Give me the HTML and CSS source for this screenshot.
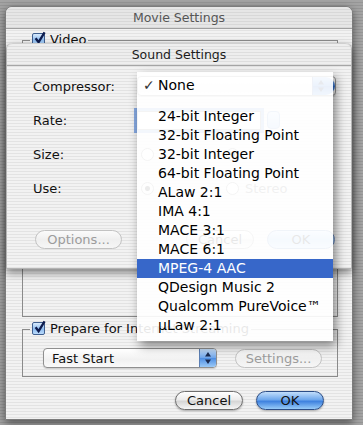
FILE: index.html
```html
<!DOCTYPE html>
<html lang="en">
<head>
    <meta charset="UTF-8">
    <title>Movie Settings</title>
    <link rel="stylesheet" href="styles.css">
</head>
<body>
    <div class="window">
        <div class="titlebar">Movie Settings</div>

        <fieldset class="group group-video">
            <legend>
                <span class="check"><svg viewBox="0 0 13 13"><path d="M2.6 6.2 L5.6 10.2 L11.6 0.4"/></svg></span>
                Video
            </legend>
        </fieldset>

        <fieldset class="group group-stream">
            <legend>
                <span class="check"><svg viewBox="0 0 13 13"><path d="M2.6 6.2 L5.6 10.2 L11.6 0.4"/></svg></span>
                Prepare for Internet Streaming
            </legend>
            <div class="group-row">
                <div class="popup popup-fast">
                    <span class="popup-text">Fast Start</span>
                    <span class="popup-arrows"><svg viewBox="0 0 16 18"><path d="M8 3 L11 7.5 H5 Z M8 15 L11 10.5 H5 Z"/></svg></span>
                </div>
                <button class="btn btn-disabled btn-settings">Settings...</button>
            </div>
        </fieldset>

        <div class="actions">
            <button class="btn">Cancel</button>
            <button class="btn btn-default">OK</button>
        </div>

        <!-- sound settings sheet, slid over the window -->
        <div class="sheet">
            <div class="sheet-title">Sound Settings</div>
            <div class="sheet-body">
                <div class="form">
                    <div class="label">Compressor:</div>
                    <div class="popup popup-compressor">
                        <span class="popup-text"></span>
                        <span class="popup-arrows"><svg viewBox="0 0 16 18"><path d="M8 3 L11 7.5 H5 Z M8 15 L11 10.5 H5 Z"/></svg></span>
                    </div>

                    <div class="label">Rate:</div>
                    <div class="field-row">
                        <div class="textfield"></div>
                        <div class="stepper"></div>
                    </div>

                    <div class="label">Size:</div>
                    <div class="field-row faint">
                        <span class="radio"></span>
                        <span class="radio on radio-second"></span>
                    </div>

                    <div class="label">Use:</div>
                    <div class="field-row faint">
                        <span class="radio on"></span>
                        <span class="radio radio-second"></span>Stereo
                    </div>
                </div>

                <div class="sheet-actions">
                    <button class="btn btn-disabled btn-options">Options...</button>
                    <button class="btn btn-faint">Cancel</button>
                    <button class="btn btn-faint btn-faint-ok">OK</button>
                </div>
            </div>

            <div class="menu">
                <div class="menu-item"><span class="menu-check">&#10003;</span>None</div>
                <div class="menu-sep"></div>
                <div class="menu-item">24-bit Integer</div>
                <div class="menu-item">32-bit Floating Point</div>
                <div class="menu-item">32-bit Integer</div>
                <div class="menu-item">64-bit Floating Point</div>
                <div class="menu-item">ALaw 2:1</div>
                <div class="menu-item">IMA 4:1</div>
                <div class="menu-item">MACE 3:1</div>
                <div class="menu-item">MACE 6:1</div>
                <div class="menu-item selected">MPEG-4 AAC</div>
                <div class="menu-item">QDesign Music 2</div>
                <div class="menu-item">Qualcomm PureVoice™</div>
                <div class="menu-item">µLaw 2:1</div>
            </div>
        </div>
    </div>
</body>
</html>
```

FILE: styles.css
```css
* {
    box-sizing: border-box;
}

body {
    margin: 0;
    height: 425px;
    overflow: hidden;
    background: repeating-linear-gradient(to bottom, #a4a4a4 0 2px, #969696 2px 3px);
    font-family: "DejaVu Sans", sans-serif;
    font-size: 13px;
    color: #111111;
}

/* pinstripes used by the window and the sheet */
.window,
.sheet {
    background: repeating-linear-gradient(to bottom, #f2f2f2 0 2px, #e3e3e3 2px 3px);
}

.window {
    position: relative;
    margin: 6px 0 0 5px;
    width: 348px;
    height: 414px;
    border: 1px solid #7c7c7c;
    border-radius: 7px 7px 0 0;
    box-shadow: 0 3px 8px rgba(0, 0, 0, 0.5);
}

.titlebar {
    height: 22px;
    line-height: 21px;
    text-align: center;
    font-size: 12.5px;
    color: #555555;
    border-bottom: 1px solid #a0a0a0;
    border-radius: 7px 7px 0 0;
    background: repeating-linear-gradient(to bottom, #e6e6e6 0 2px, #d8d8d8 2px 3px);
}

.group {
    margin: 0 0 0 16px;
    width: 316px;
    padding: 0 0 0 7px;
    border: 1px solid #8a8a8a;
    min-width: 0;
}

.group legend {
    display: flex;
    align-items: center;
    gap: 5px;
    padding: 0 2px;
    height: 16px;
    line-height: 16px;
    font-size: 13px;
}

.group-video {
    margin-top: 3px;
    height: 285px;
}

.group-stream {
    margin-top: 4px;
    height: 56px;
    padding-top: 11px;
}

.check {
    width: 13px;
    height: 13px;
    margin-top: -2px;
    border: 1px solid #3f5f8f;
    border-radius: 2px;
    background: linear-gradient(to bottom, #d9ebfd, #8fbdf0 55%, #b9dafb);
    position: relative;
}

.check svg {
    position: absolute;
    left: 0;
    top: -2px;
    width: 13px;
    height: 13px;
    overflow: visible;
}

.check path {
    fill: none;
    stroke: #0e1c4e;
    stroke-width: 2.3;
}

.group-row {
    display: flex;
    align-items: center;
    gap: 18px;
    margin-left: 13px;
}

.popup {
    display: flex;
    align-items: center;
    height: 20px;
    border: 1px solid #8f8f8f;
    border-radius: 4px;
    background: linear-gradient(to bottom, #ffffff, #f1f1f1 60%, #fafafa);
    box-shadow: 0 1px 1px rgba(0, 0, 0, 0.15);
}

.popup-text {
    flex: 1;
    padding-left: 8px;
}

.popup-arrows {
    width: 17px;
    height: 18px;
    border-left: 1px solid #5b7fb4;
    border-radius: 0 3px 3px 0;
    background: linear-gradient(to bottom, #c8e0fa, #6da4ea 50%, #4d8de2 51%, #9ccaf7);
}

.popup-arrows svg {
    width: 16px;
    height: 18px;
    display: block;
}

.popup-arrows path {
    fill: #1a2a50;
}

.popup-fast {
    width: 174px;
}

.btn {
    height: 19px;
    width: 68px;
    padding: 0;
    border: 1px solid #6e6e6e;
    border-radius: 10px;
    font-family: "DejaVu Sans", sans-serif;
    font-size: 13px;
    color: #111111;
    background: linear-gradient(to bottom, #ffffff, #ececec 45%, #d6d6d6 55%, #f6f6f6);
    box-shadow: 0 1px 2px rgba(0, 0, 0, 0.3);
}

.btn-default {
    border-color: #2c4d86;
    background: linear-gradient(to bottom, #c2defb, #6ea7ec 45%, #3f82df 55%, #98cbf8);
}

.btn-disabled {
    color: #9c9c9c;
    border-color: #c2c2c2;
    background: linear-gradient(to bottom, #fbfbfb, #efefef 50%, #f6f6f6);
    box-shadow: none;
}

.btn-settings {
    width: 87px;
}

.actions {
    display: flex;
    justify-content: flex-end;
    gap: 13px;
    margin: 14px 28px 0 0;
}

/* sheet */
.sheet {
    position: absolute;
    left: 0;
    top: 36px;
    width: 346px;
    height: 226px;
    border: 1px solid #b4b4b4;
    border-top: none;
    border-radius: 6px 6px 0 0;
    box-shadow: 0 4px 8px rgba(0, 0, 0, 0.45);
}

.sheet-title {
    height: 23px;
    line-height: 22px;
    text-align: center;
    font-size: 12.5px;
    color: #1c1c1c;
    border-top: 1px solid #cfcfcf;
    border-bottom: 1px solid #a6a6a6;
    border-radius: 6px 6px 0 0;
    background: repeating-linear-gradient(to bottom, #eeeeee 0 2px, #dedede 2px 3px);
}

.sheet-body {
    padding: 10px 0 0 26px;
}

.form {
    display: grid;
    grid-template-columns: 104px 199px;
    grid-auto-rows: 20px;
    row-gap: 14px;
    align-items: center;
}

.popup-compressor {
    width: 199px;
}

.popup-compressor .popup-arrows {
    width: 23px;
    border-radius: 0 9px 9px 0;
    background: linear-gradient(to bottom, #9cc6f5, #3c7ddc 50%, #2a69cc 51%, #6fa8ee);
}

.field-row {
    display: flex;
    align-items: center;
    gap: 6px;
}

.textfield {
    width: 124px;
    height: 19px;
    border: 1px solid #8a8a8a;
    background: #ffffff;
    box-shadow: 0 0 0 3px rgba(90, 140, 220, 0.7);
}

.stepper {
    width: 13px;
    height: 18px;
    border: 1px solid #7f9fcf;
    border-radius: 4px;
    background: linear-gradient(to bottom, #d8e8fb, #9cc3f0);
}

.faint {
    color: #666666;
}

.radio {
    width: 13px;
    height: 13px;
    border: 1px solid #8a8a8a;
    border-radius: 50%;
    background: #fafafa;
    margin-left: 4px;
}

.radio.on {
    background: radial-gradient(circle, #333333 0 2px, #eeeeee 3px);
}

.radio-second {
    margin-left: 66px;
}

.sheet-actions {
    display: flex;
    gap: 13px;
    margin-top: 32px;
    padding-left: 2px;
}

.btn-options {
    width: 87px;
    margin-right: 51px;
}

.btn-faint {
    box-shadow: none;
    border-color: #9a9a9a;
}

.btn-faint-ok {
    border-color: #6a8ac0;
    background: linear-gradient(to bottom, #d2e6fb, #9cc5f2 50%, #c4e0fb);
}

/* open popup menu */
.menu {
    position: absolute;
    left: 130px;
    top: 29px;
    width: 196px;
    padding: 4px 0 6px;
    background: rgba(255, 255, 255, 0.9);
    box-shadow: 3px 5px 10px rgba(0, 0, 0, 0.45);
    font-size: 14px;
    color: #000000;
}

.menu-item {
    height: 19px;
    line-height: 19px;
    padding-left: 21px;
    white-space: nowrap;
}

.menu-check {
    display: inline-block;
    width: 15px;
    margin-left: -15px;
    color: #333333;
    font-size: 14px;
    font-weight: bold;
}

.menu-sep {
    height: 12px;
}

.menu-item.selected {
    background: #3767c9;
    color: #ffffff;
}
```
